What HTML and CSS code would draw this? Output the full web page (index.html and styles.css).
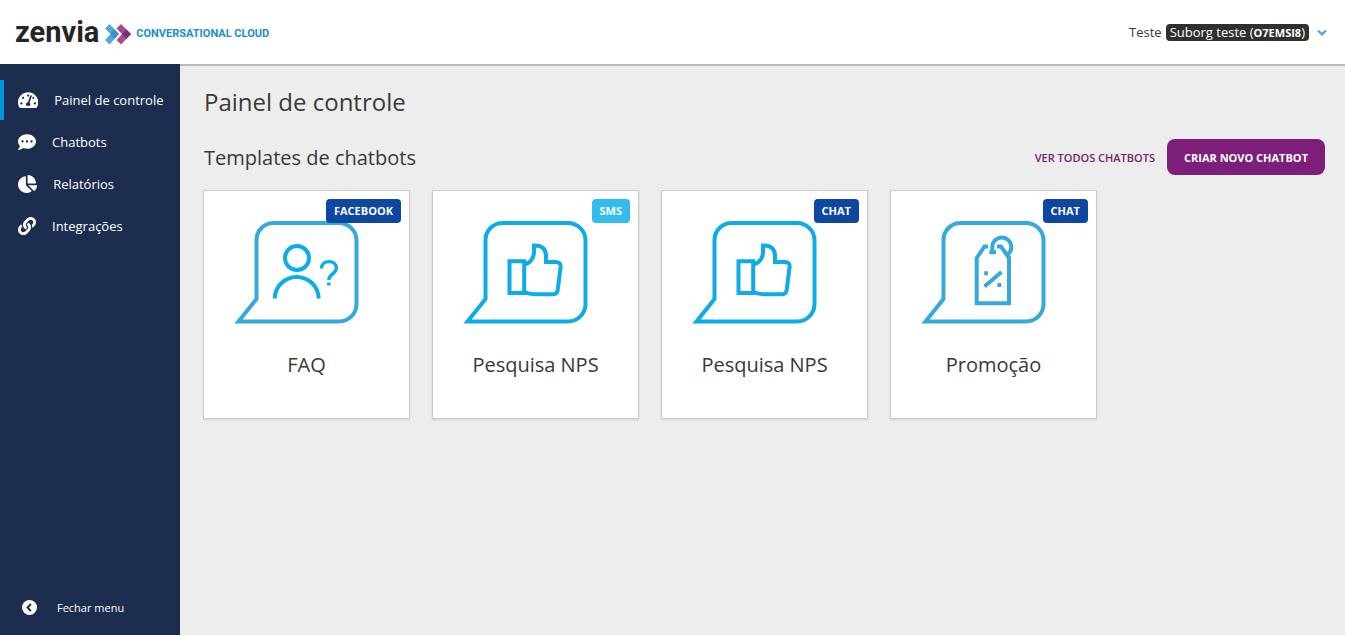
FILE: index.html
```
<!DOCTYPE html>
<html lang="pt-BR">
<head>
<meta charset="utf-8">
<meta name="viewport" content="width=device-width, initial-scale=1">
<title>Painel de controle</title>
<link rel="stylesheet" href="styles.css">
</head>
<body>
<header class="topbar">
  <a class="brand" href="#">
    <span class="brand-name">zenvia</span>
    <svg class="brand-mark" viewBox="0 0 26 21" aria-hidden="true">
      <path fill="#57a9d2" d="M0 4.500 4.500 0 14 10 4.500 20.500 0 16 5.500 10z"/>
      <path fill="#a44b95" d="M11.500 4.500 16 0 26 10 16 20.500 11.500 16 17 10z"/>
      <path fill="#2183bd" d="M9 5 14 10 9 15.500 5.500 10z" opacity=".6"/>
      <path fill="#6d1a6e" d="M21.500 5.500 26 10 21.500 15 17 10z" opacity=".7"/>
    </svg>
    <span class="brand-product">CONVERSATIONAL CLOUD</span>
  </a>
  <button class="account" type="button">
    <span>Teste</span>
    <span class="org">Suborg teste <b>(<span class="org-code">O7EMSI8</span>)</b></span>
    <svg class="chevron" viewBox="0 0 10 7" aria-hidden="true"><path d="M1 1.500 5 5.300 9 1.500" fill="none" stroke="#55a4e8" stroke-width="2.400"/></svg>
  </button>
</header>
<div class="layout">
  <nav class="sidebar">
    <ul class="menu">
      <li><a class="menu-item active" href="#">
        <svg class="icon" viewBox="0 0 576 512" aria-hidden="true"><path d="M288 32C128.940 32 0 160.940 0 320c0 52.800 14.250 102.260 39.060 144.800 5.610 9.620 16.300 15.200 27.440 15.200h443c11.140 0 21.830-5.580 27.440-15.200C561.750 422.260 576 372.800 576 320c0-159.060-128.940-288-288-288zm0 64c14.710 0 26.580 10.130 30.320 23.650-1.110 2.260-2.640 4.230-3.450 6.670l-9.220 27.670c-5.130 3.490-10.970 6.010-17.640 6.010-17.670 0-32-14.330-32-32S270.330 96 288 96zM96 384c-17.670 0-32-14.330-32-32s14.330-32 32-32 32 14.330 32 32-14.330 32-32 32zm48-160c-17.670 0-32-14.330-32-32s14.330-32 32-32 32 14.330 32 32-14.330 32-32 32zm246.770-72.410l-61.330 184C343.130 347.330 352 364.540 352 384c0 11.720-3.380 22.550-8.880 32H232.880c-5.500-9.450-8.880-20.280-8.880-32 0-33.940 26.500-61.430 59.900-63.590l61.340-184.010c4.170-12.560 17.730-19.450 30.360-15.170 12.570 4.190 19.350 17.790 15.170 30.360zm14.660 57.200l15.520-46.550c3.470-1.290 7.130-2.230 11.050-2.230 17.670 0 32 14.330 32 32s-14.330 32-32 32c-11.380-.01-20.890-6.280-26.570-15.220zM480 384c-17.670 0-32-14.330-32-32s14.330-32 32-32 32 14.330 32 32-14.330 32-32 32z"/></svg>
        <span>Painel de controle</span></a></li>
      <li><a class="menu-item" href="#">
        <svg class="icon" viewBox="0 0 512 512" aria-hidden="true"><path d="M256 32C114.600 32 0 125.100 0 240c0 49.600 21.400 95 57 130.700C44.500 421.100 2.700 466 2.200 466.500c-2.200 2.300-2.800 5.700-1.500 8.700S4.800 480 8 480c66.300 0 116-31.800 140.600-51.400 32.700 12.300 69 19.400 107.400 19.400 141.400 0 256-93.100 256-208S397.400 32 256 32zM128 272c-17.700 0-32-14.300-32-32s14.300-32 32-32 32 14.300 32 32-14.300 32-32 32zm128 0c-17.700 0-32-14.300-32-32s14.300-32 32-32 32 14.300 32 32-14.300 32-32 32zm128 0c-17.700 0-32-14.300-32-32s14.300-32 32-32 32 14.300 32 32-14.300 32-32 32z"/></svg>
        <span>Chatbots</span></a></li>
      <li><a class="menu-item" href="#">
        <svg class="icon" viewBox="0 0 544 512" aria-hidden="true"><path d="M527.790 288H290.500l158.030 158.030c6.040 6.040 15.980 6.530 22.190.68 38.700-36.460 65.320-85.610 73.130-140.860 1.340-9.460-6.510-17.850-16.060-17.850zm-15.830-64.800C503.720 103.740 408.260 8.280 288.800.04 279.680-.59 272 7.100 272 16.240V240h223.770c9.140 0 16.820-7.680 16.190-16.800zM224 288V50.710c0-9.550-8.390-17.400-17.840-16.060C86.990 51.490-4.100 155.600.14 280.370 4.500 408.510 114.830 513.590 243.030 511.980c50.400-.63 96.970-16.870 135.260-44.030 7.900-5.600 8.420-17.230 1.570-24.080L224 288z"/></svg>
        <span>Relatórios</span></a></li>
      <li><a class="menu-item" href="#">
        <svg class="icon" viewBox="0 0 512 512" aria-hidden="true"><path d="M326.612 185.391c59.747 59.809 58.927 155.698.36 214.590-.11.12-.24.25-.36.37l-67.200 67.200c-59.270 59.270-155.699 59.262-214.960 0-59.270-59.260-59.270-155.700 0-214.960l37.106-37.106c9.840-9.840 26.786-3.300 27.294 10.606.648 17.722 3.826 35.527 9.690 52.721 1.986 5.822.567 12.262-3.783 16.612l-13.087 13.087c-28.026 28.026-28.905 73.660-1.155 101.960 28.024 28.579 74.086 28.749 102.325.51l67.200-67.190c28.191-28.191 28.073-73.757 0-101.830-3.701-3.694-7.429-6.564-10.341-8.569a16.037 16.037 0 0 1-6.947-12.606c-.396-10.567 3.348-21.456 11.698-29.806l21.054-21.055c5.521-5.521 14.182-6.199 20.584-1.731a152.482 152.482 0 0 1 20.522 17.197zM467.547 44.449c-59.261-59.262-155.690-59.270-214.960 0l-67.200 67.200c-.12.12-.25.25-.36.37-58.566 58.892-59.387 154.781.36 214.590a152.454 152.454 0 0 0 20.521 17.196c6.402 4.468 15.064 3.789 20.584-1.731l21.054-21.055c8.350-8.350 12.094-19.239 11.698-29.806a16.037 16.037 0 0 0-6.947-12.606c-2.912-2.005-6.640-4.875-10.341-8.569-28.073-28.073-28.191-73.639 0-101.830l67.200-67.190c28.239-28.239 74.300-28.069 102.325.51 27.750 28.300 26.872 73.934-1.155 101.960l-13.087 13.087c-4.350 4.350-5.769 10.790-3.783 16.612 5.864 17.194 9.042 34.999 9.690 52.721.509 13.906 17.454 20.446 27.294 10.606l37.106-37.106c59.271-59.259 59.271-155.699.001-214.959z"/></svg>
        <span>Integrações</span></a></li>
    </ul>
    <button class="collapse" type="button">
      <svg class="collapse-icon" viewBox="0 0 15 15" aria-hidden="true"><circle cx="7.500" cy="7.500" r="7.500" fill="#fff"/><path d="M8.900 4 5.500 7.500 8.900 11" fill="none" stroke="#1c2d4f" stroke-width="1.900"/></svg>
      <span>Fechar menu</span>
    </button>
  </nav>
  <main class="content">
    <h1 class="page-title">Painel de controle</h1>
    <div class="section-head">
      <h2 class="section-title">Templates de chatbots</h2>
      <div class="actions">
        <a class="link-all" href="#">VER TODOS CHATBOTS</a>
        <button class="primary" type="button">CRIAR NOVO CHATBOT</button>
      </div>
    </div>
    <div class="cards">
      <article class="card">
        <span class="badge">FACEBOOK</span>
        <svg class="art soft" viewBox="0 0 145 103" aria-hidden="true">
          <path d="M39 2H105a17.500 17.500 0 0 1 17.500 17.500V83a17.500 17.500 0 0 1-17.500 17.500H4.500L22.500 78V19a17 17 0 0 1 17-17z"/>
          <g class="vivid"><circle cx="63" cy="37" r="12"/><path d="M40.800 77.500a21.900 21.500 0 0 1 43.800 0"/>
          <path stroke-width="3.400" d="M87.500 47.500C87.500 43 91 40.600 95 40.600c4.300 0 7.400 2.600 7.400 6.400 0 5.800-7.600 6-7.600 12M94.800 61.600v3"/></g>
        </svg>
        <h3 class="card-title">FAQ</h3>
      </article>
      <article class="card">
        <span class="badge sms">SMS</span>
        <svg class="art vivid" viewBox="0 0 145 103" aria-hidden="true">
          <path d="M39 2H105a17.500 17.500 0 0 1 17.500 17.500V83a17.500 17.500 0 0 1-17.500 17.500H4.500L22.500 78V19a17 17 0 0 1 17-17z"/>
          <path d="M46.500 40.300H61.200V72H46.500zM61.200 43.500C67 42.500 71 37 71 31V24.500C79 24 83 28 83 35V41H92.500Q98 41 97.600 46L94.700 69Q94 73.300 90.500 73.300H72Q66 73.300 61.200 71"/>
        </svg>
        <h3 class="card-title">Pesquisa NPS</h3>
      </article>
      <article class="card">
        <span class="badge">CHAT</span>
        <svg class="art vivid" viewBox="0 0 145 103" aria-hidden="true">
          <path d="M39 2H105a17.500 17.500 0 0 1 17.500 17.500V83a17.500 17.500 0 0 1-17.500 17.500H4.500L22.500 78V19a17 17 0 0 1 17-17z"/>
          <path d="M46.500 40.300H61.200V72H46.500zM61.200 43.500C67 42.500 71 37 71 31V24.500C79 24 83 28 83 35V41H92.500Q98 41 97.600 46L94.700 69Q94 73.300 90.500 73.300H72Q66 73.300 61.200 71"/>
        </svg>
        <h3 class="card-title">Pesquisa NPS</h3>
      </article>
      <article class="card">
        <span class="badge">CHAT</span>
        <svg class="art soft" viewBox="0 0 145 103" aria-hidden="true">
          <path d="M39 2H105a17.500 17.500 0 0 1 17.500 17.500V83a17.500 17.500 0 0 1-17.500 17.500H4.500L22.500 78V19a17 17 0 0 1 17-17z"/>
          <path d="M67 25.500H63.500L55.700 37V82.300H88V37L80 25.500H76M68.300 31.200H75M71.300 31V26a9.500 9.500 0 1 1 16 7M63.500 65.500 80.500 51M63.200 52.300h3.800M76.400 64h3.800"/>
        </svg>
        <h3 class="card-title">Promoção</h3>
      </article>
    </div>
  </main>
</div>
</body>
</html>
```

FILE: styles.css
```
* { box-sizing: border-box; }
body {
  margin: 0;
  min-height: 100vh;
  display: flex;
  flex-direction: column;
  background: #ededed;
  color: #393939;
  font-family: "Open Sans", sans-serif;
  font-size: 13px;
}
h1, h2, h3, ul { margin: 0; padding: 0; }
a { text-decoration: none; }
button { font: inherit; border: 0; background: none; padding: 0; cursor: pointer; }

.topbar {
  display: flex;
  align-items: center;
  justify-content: space-between;
  height: 64px;
  padding: 0 18px 0 15px;
  background: #fff;
}
.brand { display: flex; align-items: center; }
.brand-name {
  font-family: Roboto, sans-serif;
  font-size: 29px;
  font-weight: 700;
  line-height: 32px;
  color: #262425;
}
.brand-mark { width: 26px; height: 21px; margin: 4px 5px 0 6px; }
.brand-product { margin-top: 3px; font-family: Roboto, sans-serif; font-size: 11px; font-weight: 700; color: #1a8ecb; }
.account { display: flex; align-items: center; gap: 4px; color: #393939; }
.org { padding: 0 4px; border-radius: 4px; background: #303030; color: #fff; line-height: 16px; }
.org b { font-weight: 400; }
.org-code { font-size: 11px; font-weight: 700; }
.chevron { width: 10px; height: 7px; margin-left: 4px; }

.layout { display: flex; flex: 1; }
.sidebar {
  display: flex;
  flex-direction: column;
  justify-content: space-between;
  width: 180px;
  padding: 16px 0;
  background: #1c2d4f;
}
.menu { display: grid; gap: 2px; list-style: none; }
.menu-item {
  display: flex;
  align-items: center;
  gap: 16px;
  height: 40px;
  padding-left: 14px;
  border-left: 4px solid transparent;
  color: #fff;
}
.menu-item.active { border-color: #0095da; }
.icon { height: 18px; fill: #fff; }
.collapse { display: flex; align-items: center; gap: 20px; padding-left: 22px; height: 24px; color: #fff; font-size: 11px; }
.collapse-icon { width: 15px; height: 15px; }

.content { flex: 1; padding: 20px 20px 20px 23px; border-top: 2px solid #bababa; }
.page-title { font-size: 24px; font-weight: 400; line-height: 32px; padding-left: 1px; }
.section-head { display: flex; align-items: center; justify-content: space-between; margin: 21px 0 15px; padding-left: 1px; }
.section-title { font-size: 20px; font-weight: 400; }
.actions { display: flex; align-items: center; gap: 12px; }
.link-all { color: #75246f; font-size: 11px; font-weight: 600; }
.primary { height: 36px; padding: 0 17px; border-radius: 8px; background: #7d1f7a; color: #fff; font-size: 11px; font-weight: 700; }

.cards { display: flex; flex-wrap: wrap; gap: 22px; }
.card {
  position: relative;
  display: flex;
  flex-direction: column;
  align-items: center;
  width: 207px;
  padding: 30px 8px 39px;
  border: 1px solid #ccc;
  background: #fff;
  box-shadow: 0 1px 2px rgba(0, 0, 0, .12);
}
.badge {
  position: absolute;
  top: 8px;
  right: 8px;
  padding: 0 8px;
  border-radius: 4px;
  background: #0e47a1;
  color: #fff;
  font-size: 11px;
  font-weight: 700;
  line-height: 24px;
}
.badge.sms { background: #34bbed; }
.art { width: 145px; height: 103px; fill: none; stroke-width: 4; }
.soft { stroke: #35a8dc; }
.vivid { stroke: #0dabe8; }
.card-title { margin-top: 27px; font-size: 20px; font-weight: 400; line-height: 28px; }
```
